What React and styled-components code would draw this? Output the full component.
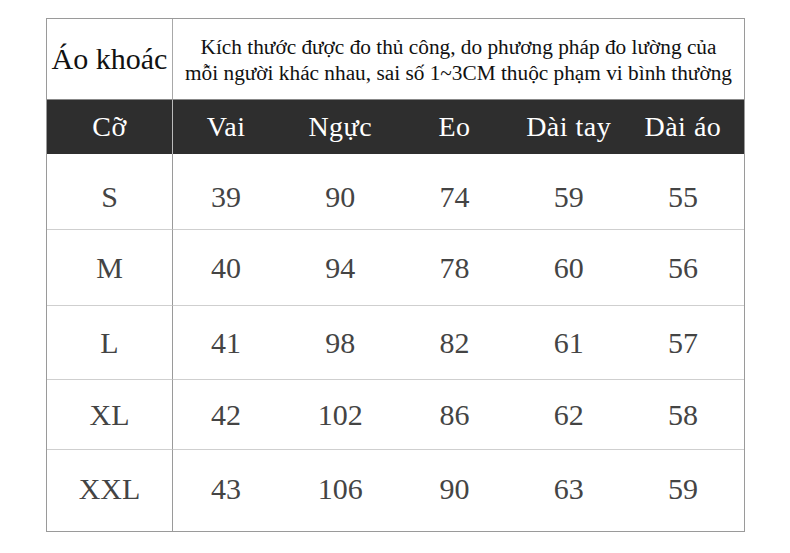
import React from "react";
import styled, { createGlobalStyle } from "styled-components";

const GlobalStyle = createGlobalStyle`
  html, body {
    margin: 0;
    padding: 0;
    background: #fff;
  }
  body {
    font-family: "Liberation Serif", "Times New Roman", serif;
    color: #222;
  }
`;

const sizes = [
  ["S", 39, 90, 74, 59, 55],
  ["M", 40, 94, 78, 60, 56],
  ["L", 41, 98, 82, 61, 57],
  ["XL", 42, 102, 86, 62, 58],
  ["XXL", 43, 106, 90, 63, 59],
];

const columns = ["Vai", "Ngực", "Eo", "Dài tay", "Dài áo"];

function SizeTable() {
  return (
    <Page>
      <Table>
        <TitleCell>Áo khoác</TitleCell>
        <NoteCell>
          Kích thước được đo thủ công, do phương pháp đo lường của
          <br />
          mỗi người khác nhau, sai số 1~3CM thuộc phạm vi bình thường
        </NoteCell>

        <HeadCell $first>Cỡ</HeadCell>
        {columns.map((c) => (
          <HeadCell key={c}>{c}</HeadCell>
        ))}

        {sizes.map((row, r) =>
          row.map((v, i) => (
            <DataCell
              key={r + "-" + i}
              $first={i === 0}
              $top={r === 0}
              $last={r === sizes.length - 1}
            >
              {v}
            </DataCell>
          ))
        )}
      </Table>
    </Page>
  );
}

export default function App() {
  return (
    <>
      <GlobalStyle />
      <SizeTable />
    </>
  );
}

const Page = styled.div`
  width: 790px;
  height: 553px;
  padding: 18px 0 0 46px;
  box-sizing: border-box;
`;

const Table = styled.div`
  display: grid;
  grid-template-columns: 126px repeat(5, 1fr);
  grid-template-rows: 81px 54px 76px 76px 74px 70px 81px;
  width: 699px;
  box-sizing: border-box;
  border: 1px solid #9a9a9a;
  font-family: "Liberation Serif", "Times New Roman", serif;
`;

const TitleCell = styled.div`
  display: flex;
  align-items: center;
  justify-content: center;
  font-family: "Liberation Serif", "Times New Roman", serif;
  font-size: 30px;
  color: #111;
  border-right: 1px solid #a8a8a8;
  border-bottom: 1px solid #888;
`;

const NoteCell = styled.div`
  grid-column: span 5;
  display: flex;
  align-items: center;
  justify-content: center;
  text-align: center;
  font-family: "Liberation Serif", "Times New Roman", serif;
  font-size: 21.3px;
  line-height: 26px;
  color: #111;
  padding-top: 2px;
  border-bottom: 1px solid #888;
`;

const HeadCell = styled.div`
  display: flex;
  align-items: center;
  justify-content: center;
  background: #2e2e2e;
  color: #fff;
  font-family: "Liberation Serif", "Times New Roman", serif;
  font-size: 28px;
  letter-spacing: 0.5px;
  padding-right: ${(p) => (p.$first ? "0" : "8px")};
  border-right: ${(p) => (p.$first ? "1px solid #bbb" : "none")};
`;

const DataCell = styled.div`
  display: flex;
  align-items: center;
  justify-content: center;
  font-family: "Liberation Serif", "Times New Roman", serif;
  font-size: 30px;
  color: #444;
  padding-top: ${(p) => (p.$top ? "10px" : "0")};
  padding-bottom: ${(p) => (p.$last ? "4px" : "0")};
  padding-right: ${(p) => (p.$first ? "0" : "8px")};
  border-bottom: ${(p) => (p.$last ? "none" : "1px solid #cfcfcf")};
  border-right: ${(p) => (p.$first ? "1px solid #9a9a9a" : "none")};
`;
